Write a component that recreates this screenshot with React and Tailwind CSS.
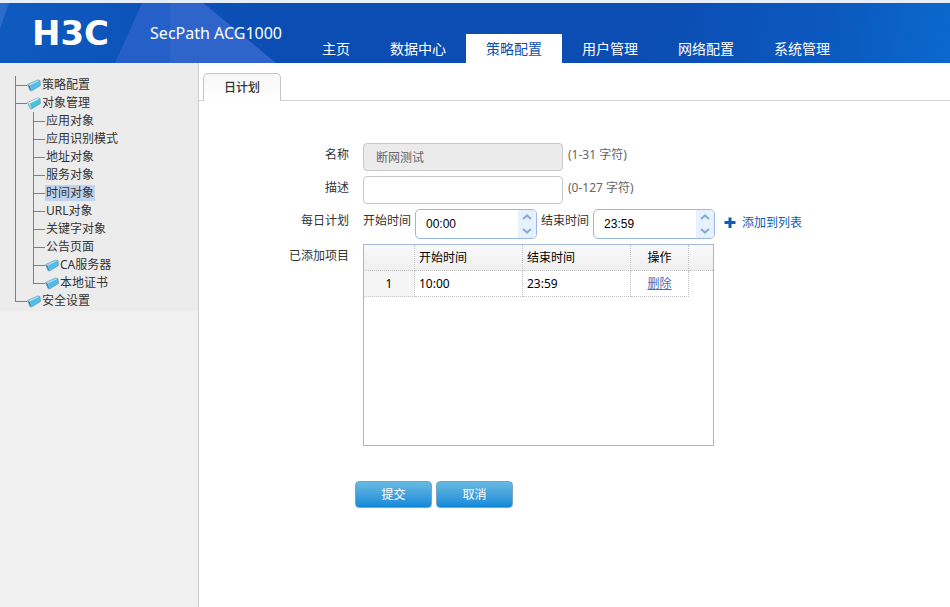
import { useState } from 'react'

const NAV = ['主页', '数据中心', '策略配置', '用户管理', '网络配置', '系统管理']

const TREE = [
  { label: '策略配置', folder: true },
  {
    label: '对象管理',
    folder: true,
    open: true,
    children: [
      { label: '应用对象' },
      { label: '应用识别模式' },
      { label: '地址对象' },
      { label: '服务对象' },
      { label: '时间对象' },
      { label: 'URL对象' },
      { label: '关键字对象' },
      { label: '公告页面' },
      { label: 'CA服务器', folder: true },
      { label: '本地证书', folder: true },
    ],
  },
  { label: '安全设置', folder: true },
]

function BookIcon({ open }) {
  return (
    <svg className="w-[14px] h-[14px] shrink-0" viewBox="0 0 14 14" aria-hidden="true">
      <path d="M0.5 6.5 L3 7.5 L4.5 13 L3 12.5 Z" fill={open ? '#9adbe8' : '#3f86b4'} />
      <path d="M0.5 6.5 L10.5 2 L13 2.5 L3 7.5 Z" fill={open ? '#f6fbfd' : '#a5dcf4'} />
      <path d="M3 7.5 L13 2.5 L13.5 7.5 L4.5 13 Z" fill={open ? '#46c3d8' : '#4fbdec'} />
      <path d="M0.5 6.5 L10.5 2 L13 2.5 L13.5 7.5 L4.5 13 L3 12.5 Z" fill="none" stroke="#5b93b3" strokeWidth="0.6" />
    </svg>
  )
}

// 树连接线：上半段带横线，下半段在最后一项时不画
function Connector({ last }) {
  return (
    <span className="w-3 h-[18px] flex flex-col shrink-0" aria-hidden="true">
      <span className="h-[10px] border-l border-b border-[#808080]" />
      <span className={last ? 'flex-1' : 'flex-1 border-l border-[#808080]'} />
    </span>
  )
}

function TreeList({ items, selected, onSelect }) {
  return (
    <ul>
      {items.map((item, i) => {
        const last = i === items.length - 1
        return (
          <li key={item.label}>
            <div className="flex items-center h-[18px]">
              <Connector last={last} />
              {item.folder && <BookIcon open={item.open} />}
              <a
                href="#"
                onClick={e => { e.preventDefault(); onSelect(item.label) }}
                className={`leading-4 whitespace-nowrap ${item.folder ? 'pl-px' : 'pl-px pr-px'} ${
                  selected === item.label ? 'bg-[#bfd3ee]' : ''
                }`}
              >
                {item.label}
              </a>
            </div>
            {item.children && (
              <div className={last ? 'pl-[18px]' : 'pl-[17px] border-l border-[#808080]'}>
                <TreeList items={item.children} selected={selected} onSelect={onSelect} />
              </div>
            )}
          </li>
        )
      })}
    </ul>
  )
}

function Row({ label, htmlFor, children }) {
  return (
    <div className="flex items-start gap-[14px]">
      <label htmlFor={htmlFor} className="w-[150px] shrink-0 text-right leading-6">{label}</label>
      {children}
    </div>
  )
}

function Chevron({ down }) {
  return (
    <svg className="w-[10px] h-[6px]" viewBox="0 0 10 6" aria-hidden="true">
      <path
        d={down ? 'M1 1 L5 4.6 L9 1' : 'M1 5 L5 1.4 L9 5'}
        fill="none"
        stroke="#82aed6"
        strokeWidth="2"
      />
    </svg>
  )
}

function TimeSpinner({ id, value, onChange }) {
  function step(delta) {
    const [h, m] = value.split(':').map(Number)
    const total = (h * 60 + m + delta + 1440) % 1440
    onChange(
      `${String(Math.floor(total / 60)).padStart(2, '0')}:${String(total % 60).padStart(2, '0')}`
    )
  }

  return (
    <div className="w-[122px] h-[30px] flex border border-[#95b8e7] rounded-[5px] overflow-hidden bg-white">
      <input
        id={id}
        type="text"
        value={value}
        onChange={e => onChange(e.target.value)}
        className="flex-1 min-w-0 px-[10px] text-black font-['Liberation_Sans',sans-serif] outline-none"
      />
      <div className="w-[18px] flex flex-col bg-[#e6f1fd]">
        <button type="button" aria-label="增加" onClick={() => step(1)} className="flex-1 flex items-center justify-center">
          <Chevron />
        </button>
        <button type="button" aria-label="减少" onClick={() => step(-1)} className="flex-1 flex items-center justify-center">
          <Chevron down />
        </button>
      </div>
    </div>
  )
}

const FIELD = 'w-[200px] h-7 px-3 rounded-[4px] border border-[#c8c8c8] outline-none'
const ACTION = 'w-[77px] h-[27px] rounded-[4px] border border-[#7aa3bd] bg-linear-to-b from-[#67b9e2] to-[#0b8ad8] text-white'
const CELL = 'border-r border-b border-dotted border-[#c4c4c4] px-1 font-normal'

export default function App() {
  const [tab, setTab]           = useState('策略配置')
  const [selected, setSelected] = useState('时间对象')
  const [desc, setDesc]         = useState('')
  const [start, setStart]       = useState('00:00')
  const [end, setEnd]           = useState('23:59')
  const [items, setItems]       = useState([{ start: '10:00', end: '23:59' }])

  return (
    <div className="min-h-screen flex flex-col bg-white text-xs text-[#333] font-['Noto_Sans','Noto_Sans_CJK_SC',sans-serif]">
      <header className="relative h-[63px] shrink-0 flex border-t-3 border-[#e4effb] bg-[linear-gradient(100deg,#0e5abf_0%,#0b4db3_30%,#0b4db3_68%,#0b58be_86%,#0c68cc_100%)] text-white">
        <svg className="absolute left-0 top-0 w-[276px] h-[60px]" viewBox="0 0 276 60" aria-hidden="true">
          <path d="M0 0 H9 L0 26 Z" fill="#2a6ccb" />
          <path d="M142 0 H203 L276 60 H115 Z" fill="#2560c8" />
          <path d="M170 0 H203 L276 60 H170 Z" fill="#2f64cb" />
        </svg>
        <div className="relative w-[302px] shrink-0 flex items-center pl-8 pr-5 justify-between">
          <span className="text-[34px] leading-none font-bold font-['DejaVu_Sans',sans-serif]">H3C</span>
          <span className="text-base whitespace-nowrap">SecPath ACG1000</span>
        </div>
        <nav className="relative flex items-end text-sm">
          {NAV.map(name => (
            <a
              key={name}
              href="#"
              onClick={e => { e.preventDefault(); setTab(name) }}
              className={`h-[29px] px-5 leading-[29px] whitespace-nowrap ${
                tab === name ? 'bg-white text-[#0b50b4]' : ''
              }`}
            >
              {name}
            </a>
          ))}
        </nav>
      </header>

      <div className="flex-1 flex">
        <aside className="w-[199px] shrink-0 border-r border-[#cfcfcf] bg-[#f0f0f0]">
          <div className="bg-[#ececec] pt-[13px] pb-px pl-[15px]">
            <TreeList items={TREE} selected={selected} onSelect={setSelected} />
          </div>
        </aside>

        <main className="flex-1 min-w-0">
          <div className="pt-[10px] pl-1 flex border-b border-[#d3d3d3]">
            <button
              type="button"
              className="h-7 -mb-px px-5 border border-b-0 border-[#c6c6c6] rounded-t-[5px] bg-linear-to-b from-[#f6f6f6] to-white font-medium"
            >
              日计划
            </button>
          </div>

          <form className="pt-[42px]" onSubmit={e => e.preventDefault()}>
            <div className="flex flex-col gap-[5px]">
              <Row label="名称" htmlFor="name">
                <div className="flex gap-[5px]">
                  <input id="name" type="text" value="断网测试" disabled className={`${FIELD} bg-[#ebebeb] text-[#666]`} />
                  <span className="leading-6 text-[#666]">(1-31 字符)</span>
                </div>
              </Row>
              <Row label="描述" htmlFor="desc">
                <div className="flex gap-[5px]">
                  <input
                    id="desc"
                    type="text"
                    value={desc}
                    onChange={e => setDesc(e.target.value)}
                    className={`${FIELD} bg-white`}
                  />
                  <span className="leading-6 text-[#666]">(0-127 字符)</span>
                </div>
              </Row>
              <Row label="每日计划" htmlFor="start">
                <div className="flex gap-1">
                  <label htmlFor="start" className="leading-6">开始时间</label>
                  <TimeSpinner id="start" value={start} onChange={setStart} />
                  <label htmlFor="end" className="leading-6">结束时间</label>
                  <TimeSpinner id="end" value={end} onChange={setEnd} />
                  <button
                    type="button"
                    onClick={() => setItems([...items, { start, end }])}
                    className="h-7 pl-[5px] flex items-center gap-[6px] text-[#0c5cb8]"
                  >
                    <svg className="w-3 h-3" viewBox="0 0 12 12" aria-hidden="true">
                      <path d="M4.5 0.5 H7.5 V4 H11.5 V7 H7.5 V11 H4.5 V7 H0.5 V4 H4.5 Z" fill="#0c5cb8" />
                    </svg>
                    添加到列表
                  </button>
                </div>
              </Row>
              <Row label="已添加项目">
                <div className="w-[351px] min-h-[202px] border border-[#a3b9d6]">
                  <table className="w-full table-fixed border-separate border-spacing-0 text-left text-black">
                    <colgroup>
                      <col className="w-[51px]" />
                      <col className="w-[108px]" />
                      <col className="w-[108px]" />
                      <col className="w-[58px]" />
                      <col />
                    </colgroup>
                    <thead>
                      <tr className="h-[26px] bg-linear-to-b from-[#f9f9f9] to-[#efefef]">
                        <th className={CELL} />
                        <th className={CELL}>开始时间</th>
                        <th className={CELL}>结束时间</th>
                        <th className={`${CELL} text-center`}>操作</th>
                        <th className="border-b border-dotted border-[#c4c4c4]" />
                      </tr>
                    </thead>
                    <tbody>
                      {items.map((item, i) => (
                        <tr key={i} className="h-[26px]">
                          <td className={`${CELL} text-center bg-[#f5f5f5]`}>{i + 1}</td>
                          <td className={CELL}>{item.start}</td>
                          <td className={CELL}>{item.end}</td>
                          <td className={`${CELL} text-center`}>
                            <a
                              href="#"
                              onClick={e => { e.preventDefault(); setItems(items.filter((_, n) => n !== i)) }}
                              className="text-[#3f6fb5] underline"
                            >
                              删除
                            </a>
                          </td>
                          <td />
                        </tr>
                      ))}
                    </tbody>
                  </table>
                </div>
              </Row>
            </div>

            <div className="flex gap-1 pt-[35px] pl-[156px]">
              <button type="submit" className={ACTION}>提交</button>
              <button type="button" className={ACTION}>取消</button>
            </div>
          </form>
        </main>
      </div>
    </div>
  )
}
